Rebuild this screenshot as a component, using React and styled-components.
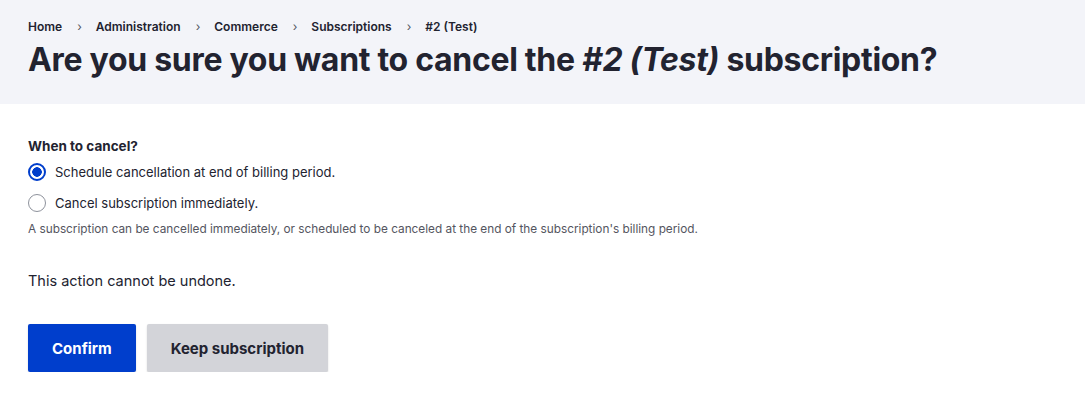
import styled, { createGlobalStyle } from "styled-components";

const GlobalStyle = createGlobalStyle`
  body {
    margin: 0;
    background: #fff;
    font-family: Inter, "Noto Sans", sans-serif;
    color: #222330;
    -webkit-font-smoothing: antialiased;
  }
`;

const crumbs = ["Home", "Administration", "Commerce", "Subscriptions", "#2 (Test)"];

function App() {
  return (
    <>
      <GlobalStyle />
      <Header>
        <Breadcrumb>
          {crumbs.map((c, i) => (
            <Crumb key={c} $last={i === crumbs.length - 1}>
              {c}
            </Crumb>
          ))}
        </Breadcrumb>
        <Title>
          Are you sure you want to cancel the <em>#2 (Test)</em> subscription?
        </Title>
      </Header>
      <Content>
        <Fieldset>
          <Legend>When to cancel?</Legend>
          <Option>
            <Radio $checked />
            Schedule cancellation at end of billing period.
          </Option>
          <Option>
            <Radio />
            Cancel subscription immediately.
          </Option>
          <Description>
            A subscription can be cancelled immediately, or scheduled to be canceled at the end of the
            subscription's billing period.
          </Description>
        </Fieldset>
        <Warning>This action cannot be undone.</Warning>
        <Actions>
          <Button $primary>Confirm</Button>
          <Button>Keep subscription</Button>
        </Actions>
      </Content>
    </>
  );
}

export default App;

const Header = styled.div`
  background: #f3f4f9;
  padding: 19px 28px 24px;
`;

const Breadcrumb = styled.ol`
  display: flex;
  margin: 0;
  padding: 0;
  list-style: none;
  font-size: 12px;
  line-height: 16px;
  font-weight: 600;
`;

const Crumb = styled.li`
  display: flex;
  align-items: center;

  &::after {
    content: ${(p) => (p.$last ? "none" : '"›"')};
    margin: 0 14px 0 15px;
    font-weight: 400;
    color: #545560;
  }
`;

const Title = styled.h1`
  margin: 5px 0 0;
  font-size: 32px;
  line-height: 40px;
  font-weight: 700;
  letter-spacing: -0.3px;

  em {
    font-style: italic;
  }
`;

const Content = styled.div`
  padding: 33px 28px 0;
`;

const Fieldset = styled.div`
  display: flex;
  flex-direction: column;
`;

const Legend = styled.div`
  font-size: 13.5px;
  line-height: 18px;
  font-weight: 700;
  margin-bottom: 1px;
`;

const Option = styled.label`
  display: flex;
  align-items: center;
  gap: 9px;
  height: 31px;
  font-size: 13px;
  color: #222330;
`;

const Radio = styled.span`
  box-sizing: border-box;
  width: 18px;
  height: 18px;
  border-radius: 50%;
  border: ${(p) => (p.$checked ? "2px solid #003ecc" : "1px solid #8e929c")};
  background: ${(p) =>
    p.$checked ? "radial-gradient(circle, #003ecc 0 4.5px, #fff 5px)" : "#fff"};
  flex-shrink: 0;
`;

const Description = styled.div`
  font-size: 11.8px;
  line-height: 16px;
  color: #545560;
  margin-top: 3px;
`;

const Warning = styled.p`
  margin: 32px 0 0;
  font-size: 14.5px;
  line-height: 24px;
`;

const Actions = styled.div`
  display: flex;
  gap: 11px;
  margin-top: 31px;
`;

const Button = styled.button`
  height: 48px;
  padding: 0 24px;
  border: 0;
  border-radius: 2px;
  font-family: inherit;
  font-size: 15px;
  font-weight: 700;
  background: ${(p) => (p.$primary ? "#003ecc" : "#d3d4d9")};
  color: ${(p) => (p.$primary ? "#fff" : "#222330")};
  box-shadow: 0 1px 2px rgba(0, 0, 0, 0.15);
  cursor: pointer;
`;
